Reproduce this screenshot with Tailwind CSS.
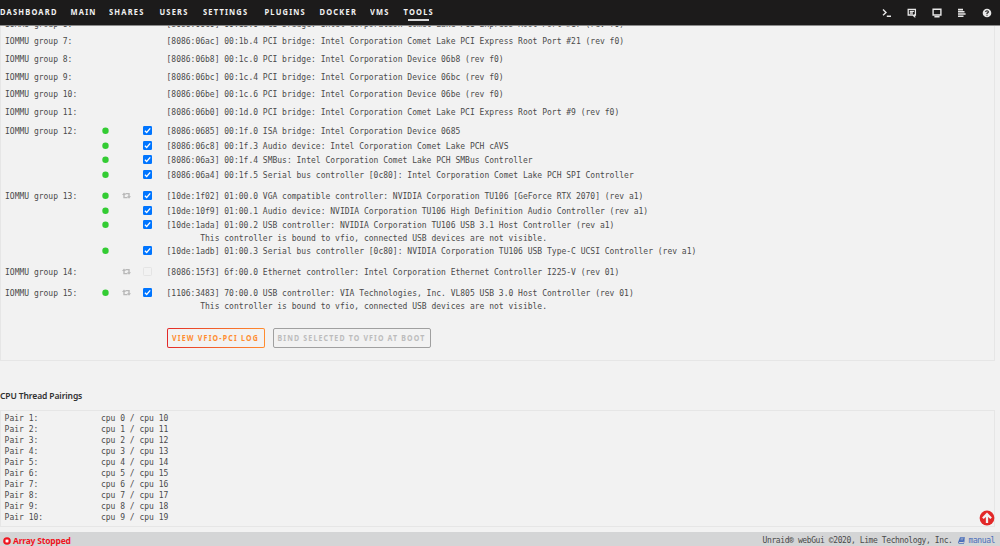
<!DOCTYPE html>
<html lang="en">

<head>
    <meta charset="utf-8">
    <title>Tower/SysDevs</title>
    <script src="https://cdn.jsdelivr.net/npm/@tailwindcss/browser@4"></script>
</head>

<body class="h-[546px] overflow-hidden bg-[#f2f2f2] text-[#1c1b1b] font-['Noto_Sans',sans-serif]">
    <header class="fixed inset-x-0 top-0 z-10 h-[26px] bg-[#1c1b1b] border-b border-[#8c8c8c] flex justify-between">
        <nav class="flex h-full pt-[6px] text-[7.5px] leading-[13px] font-bold tracking-[1.2px] text-[#f2f2f2] whitespace-nowrap">
            <a class="w-[70.5px]"><span class="inline-block scale-y-[1.12]">DASHBOARD</span></a>
            <a class="w-[38.5px]"><span class="inline-block scale-y-[1.12]">MAIN</span></a>
            <a class="w-[50.5px]"><span class="inline-block scale-y-[1.12]">SHARES</span></a>
            <a class="w-[43.5px]"><span class="inline-block scale-y-[1.12]">USERS</span></a>
            <a class="w-[61.5px]"><span class="inline-block scale-y-[1.12]">SETTINGS</span></a>
            <a class="w-[55px]"><span class="inline-block scale-y-[1.12]">PLUGINS</span></a>
            <a class="w-[50.5px]"><span class="inline-block scale-y-[1.12]">DOCKER</span></a>
            <a class="w-[33.5px]"><span class="inline-block scale-y-[1.12]">VMS</span></a>
            <a class="w-[30px]"><span class="inline-block scale-y-[1.12]">TOOLS</span><i class="block w-[21px] h-[1.5px] ml-[4.5px] bg-[#d8d8d8]"></i></a>
        </nav>
        <div class="flex items-center gap-[15px] pr-[8px] text-[#e8e8e8]">
            <svg class="w-[10px] h-[10px]" viewBox="0 0 10 10" fill="none" stroke="currentColor" stroke-width="1.4"><path d="M1 1.5 4 4.4 1 7.3M4.8 8.3H9" /></svg>
            <svg class="w-[10px] h-[10px]" viewBox="0 0 10 10" fill="none" stroke="currentColor" stroke-width="1.3"><path d="M1.2 1.4H8.4V7H7.6V8.6L5.8 7H1.2ZM2.8 3.3H6.9M2.8 5H5.9" /></svg>
            <svg class="w-[10px] h-[10px]" viewBox="0 0 10 10" fill="none" stroke="currentColor" stroke-width="1.4"><path d="M1.1 1.3H8.9V7H1.1ZM2.4 8.8H7.6" /></svg>
            <svg class="w-[10px] h-[10px]" viewBox="0 0 10 10" fill="none" stroke="currentColor" stroke-width="1.6"><path d="M1 1.6H6M1 3.8H7.5M1 6H8.6M1 8.2H6.5" /></svg>
            <svg class="w-[10px] h-[10px]" viewBox="0 0 10 10"><circle cx="5" cy="5" r="4.3" fill="currentColor" /><path d="M3.6 4Q3.7 2.7 5 2.7T6.4 3.9Q6.3 4.7 5 5.2V5.9M5 6.7V7.7" fill="none" stroke="#1c1b1b" stroke-width="1.1" /></svg>
        </div>
    </header>

    <main class="h-[532px] pr-[5px] flex flex-col">
        <section class="h-[361px] shrink-0 pt-[17.8px] border-x border-b border-[#e6e6e6]">
            <div id="groups" class="flex flex-col gap-[6.6px] font-['DejaVu_Sans_Mono',monospace] text-[8px] leading-[11px] text-[#4a4a4a] whitespace-pre"></div>
            <div class="flex gap-[8px] pl-[165.5px] pt-[17px]">
                <button class="w-[98px] h-[20px] rounded-[2px] p-px bg-linear-to-r from-[#e22828] to-[#ff8c2f]">
                    <span class="flex h-full items-center justify-center rounded-[1px] bg-[#f2f2f2] text-[7px] font-bold tracking-[1.2px] text-[#ff8c2f] whitespace-nowrap"><span class="translate-y-[0.5px] scale-y-[1.18]">VIEW VFIO-PCI LOG</span></span>
                </button>
                <button class="w-[158px] h-[20px] rounded-[2px] border border-[#a0a0a0] flex items-center justify-center text-[7px] font-bold tracking-[1.15px] text-[#bcbcbc] whitespace-nowrap"><span class="translate-y-[0.5px] scale-y-[1.18]">BIND SELECTED TO VFIO AT BOOT</span></button>
            </div>
        </section>
        <h2 class="h-[49px] shrink-0 pt-[28px] text-[8.5px] leading-[13px] font-semibold tracking-[-0.1px] text-[#303030]">CPU Thread Pairings</h2>
        <section class="h-[117px] shrink-0 pt-[1.5px] pl-[3.6px] border border-[#e6e6e6]">
            <pre id="pairs" class="font-['DejaVu_Sans_Mono',monospace] text-[8px] leading-[11px] text-[#4a4a4a]"></pre>
        </section>
    </main>

    <button class="fixed right-[5px] top-[510px] w-[16px] h-[16px]">
        <svg viewBox="0 0 16 16" fill="none"><circle cx="8" cy="8" r="7.4" fill="#e22828" /><path d="M8 13V4M3.9 8.3 8 4.2 12.1 8.3" stroke="#f2f2f2" stroke-width="2.3" /></svg>
    </button>

    <footer class="h-[14px] bg-[#d4d5d6] flex items-center justify-between pl-[3px] pr-[5px] pt-[3px]">
        <div class="flex items-center gap-[2px] text-[8.5px] leading-[12px] font-bold tracking-[-0.2px] text-[#f0141e]">
            <svg class="w-[8px] h-[8px]" viewBox="0 0 8 8"><circle cx="4" cy="4" r="3.8" fill="currentColor" /><path d="M2.7 2.7 5.3 5.3M5.3 2.7 2.7 5.3" stroke="#fff" stroke-width="1.4" /></svg>
            <span>Array Stopped</span>
        </div>
        <div class="flex items-center font-['DejaVu_Sans_Mono',monospace] text-[8px] leading-[12px] tracking-[-0.4px] text-[#4a4a4a] whitespace-pre">
            <span class="scale-y-[1.13]">Unraid® webGui ©2020, Lime Technology, Inc.</span>
            <svg class="w-[7px] h-[7px] ml-[5px] mr-[4px]" viewBox="0 0 7 7"><path d="M2 .2H7L5.7 5H1.2Q.8 5.6 1.3 5.9H5.6L6.5 2.4 6.9 2.7 5.9 6.8H1Q-.2 6.3.2 5Z" fill="#486dba" /><path d="M2.7 1.6H5.4M2.4 2.8H5" stroke="#d4d5d6" stroke-width=".5" /></svg>
            <span class="scale-y-[1.13] text-[#486dba]">manual</span>
        </div>
    </footer>

    <script>
        // flags: d = bound to vfio, r = supports reset, c = checked, u = unchecked
        const groups = [
            ['6', ['', '[8086:06c0] 00:1b.0 PCI bridge: Intel Corporation Comet Lake PCI Express Root Port #17 (rev f0)']],
            ['7', ['', '[8086:06ac] 00:1b.4 PCI bridge: Intel Corporation Comet Lake PCI Express Root Port #21 (rev f0)']],
            ['8', ['', '[8086:06b8] 00:1c.0 PCI bridge: Intel Corporation Device 06b8 (rev f0)']],
            ['9', ['', '[8086:06bc] 00:1c.4 PCI bridge: Intel Corporation Device 06bc (rev f0)']],
            ['10', ['', '[8086:06be] 00:1c.6 PCI bridge: Intel Corporation Device 06be (rev f0)']],
            ['11', ['', '[8086:06b0] 00:1d.0 PCI bridge: Intel Corporation Comet Lake PCI Express Root Port #9 (rev f0)']],
            ['12',
                ['dc', '[8086:0685] 00:1f.0 ISA bridge: Intel Corporation Device 0685'],
                ['dc', '[8086:06c8] 00:1f.3 Audio device: Intel Corporation Comet Lake PCH cAVS'],
                ['dc', '[8086:06a3] 00:1f.4 SMBus: Intel Corporation Comet Lake PCH SMBus Controller'],
                ['dc', '[8086:06a4] 00:1f.5 Serial bus controller [0c80]: Intel Corporation Comet Lake PCH SPI Controller']],
            ['13',
                ['drc', '[10de:1f02] 01:00.0 VGA compatible controller: NVIDIA Corporation TU106 [GeForce RTX 2070] (rev a1)'],
                ['dc', '[10de:10f9] 01:00.1 Audio device: NVIDIA Corporation TU106 High Definition Audio Controller (rev a1)'],
                ['dc', '[10de:1ada] 01:00.2 USB controller: NVIDIA Corporation TU106 USB 3.1 Host Controller (rev a1)'],
                ['', '       This controller is bound to vfio, connected USB devices are not visible.'],
                ['dc', '[10de:1adb] 01:00.3 Serial bus controller [0c80]: NVIDIA Corporation TU106 USB Type-C UCSI Controller (rev a1)']],
            ['14', ['ru', '[8086:15f3] 6f:00.0 Ethernet controller: Intel Corporation Ethernet Controller I225-V (rev 01)']],
            ['15',
                ['drc', '[1106:3483] 70:00.0 USB controller: VIA Technologies, Inc. VL805 USB 3.0 Host Controller (rev 01)'],
                ['', '       This controller is bound to vfio, connected USB devices are not visible.']],
        ];

        const dot = '<svg class="w-[7px] h-[7px]" viewBox="0 0 7 7"><circle cx="3.5" cy="3.7" r="3.2" fill="#33cc33"/></svg>';
        const reset = '<svg class="w-[9px] h-[7px] -ml-px" viewBox="0 0 9 7"><path d="M2 2V5.6H5.6M3.4 1.6H7V5" fill="none" stroke="#b8b8b8" stroke-width="1.4"/><path d="M0 3 2 .5 4 3ZM5 4.2H9L7 6.7Z" fill="#b8b8b8"/></svg>';
        const checked = '<svg class="w-[9px] h-[9px]" viewBox="0 0 9 9"><rect width="9" height="9" rx="1.2" fill="#0075ff"/><path d="M1.9 4.7 3.7 6.5 7.2 2.3" fill="none" stroke="#fff" stroke-width="1.3"/></svg>';
        const unchecked = '<i class="block w-[9px] h-[9px] rounded-[1.5px] border border-[#e4e4e4]"></i>';

        document.getElementById('groups').innerHTML = groups.map(([id, ...rows]) => '<div>' + rows.map(([f, text], i) => {
            const height = /[cu]/.test(f) ? 'h-[14.6px]' : 'h-[11px]';
            const box = f.includes('c') ? checked : f.includes('u') ? unchecked : '';
            return `<div class="${height} grid grid-cols-[97px_20.5px_20.5px_23.5px_auto] items-center pl-[4px]"><span class="translate-y-[0.2px] scale-y-[1.13]">${i ? '' : 'IOMMU group ' + id + ':'}</span><span>${f.includes('d') ? dot : ''}</span><span>${f.includes('r') ? reset : ''}</span><span>${box}</span><span class="translate-y-[0.2px] scale-y-[1.13]">${text}</span></div>`;
        }).join('') + '</div>').join('');

        let pairs = '';
        for (let i = 0; i < 10; i++) {
            pairs += `<div class="scale-y-[1.13]">${`Pair ${i + 1}:`.padEnd(20)}cpu ${i} / cpu ${i + 10}</div>`;
        }
        document.getElementById('pairs').innerHTML = pairs;
    </script>
</body>

</html>
